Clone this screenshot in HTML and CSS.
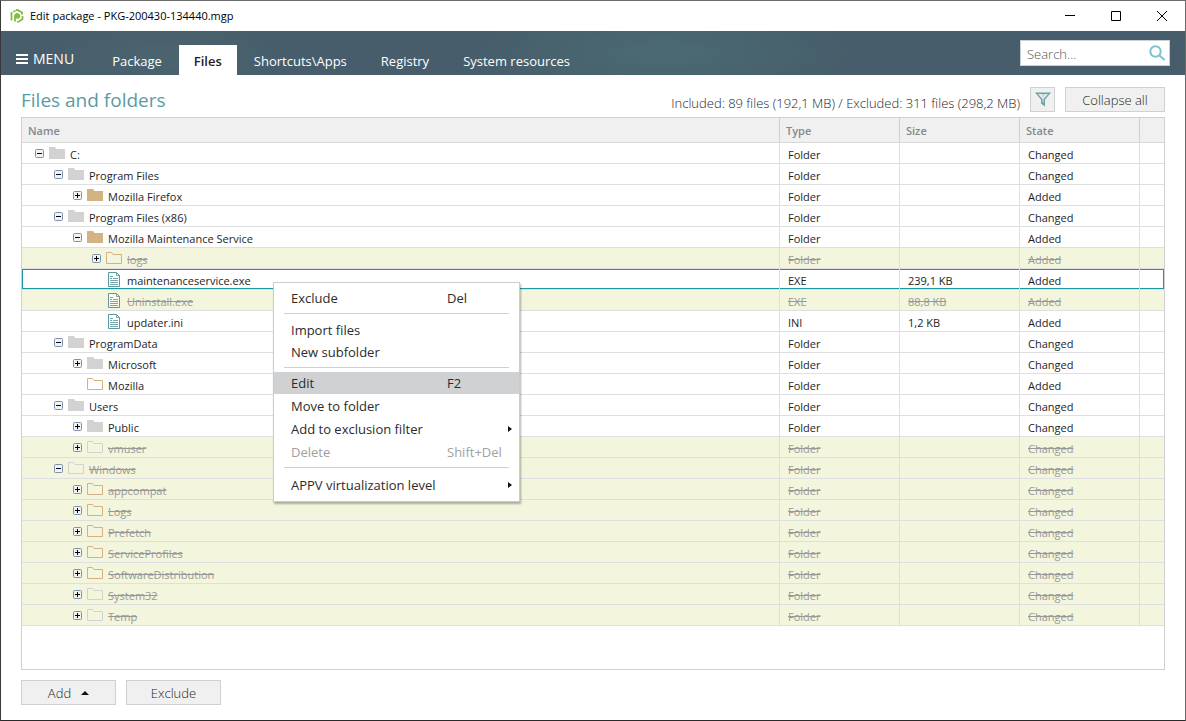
FILE: index.html
```html
<!DOCTYPE html>
<html lang="en">
<head>
<meta charset="utf-8">
<title>Edit package - PKG-200430-134440.mgp</title>
<link rel="stylesheet" href="styles.css">
</head>
<body>
<svg class="defs" aria-hidden="true">
  <symbol id="folder" viewBox="0 0 16 12"><path d="M0 0h6l1.500 2H16v10H0z" fill="currentColor"/></symbol>
  <symbol id="folder-open" viewBox="0 0 16 12"><path d="M.5.5h5L7 2.500h8.500v9H.5z" fill="none" stroke="currentColor"/></symbol>
  <symbol id="file" viewBox="0 0 16 15"><path d="M2.500.5h8l3 3v11h-11z" fill="#fff" fill-opacity=".6" stroke="#5f979c"/><path d="M10.500.5v3h3M4 4.500h3M4 6.500h2M7 6.500h5M4 8.500h8M4 10.500h8M4 12.500h8" fill="none" stroke="#5f979c" stroke-opacity=".85"/></symbol>
  <symbol id="minus" viewBox="0 0 9 9"><rect x=".5" y=".5" width="8" height="8" rx="1" fill="#f4f2ee" stroke="#7b93b0"/><path d="M2 4.500h5" stroke="#000"/></symbol>
  <symbol id="plus" viewBox="0 0 9 9"><rect x=".5" y=".5" width="8" height="8" rx="1" fill="#f4f2ee" stroke="#7b93b0"/><path d="M2 4.500h5M4.500 2v5" stroke="#000"/></symbol>
</svg>
<div class="window">
  <header class="titlebar">
    <svg class="app-icon" viewBox="0 0 14 14" fill="none" stroke="#86bb40" stroke-width="1.800"><path d="M1.500 3v8.500"/><path d="M5 12.500V6.500L7 4.300"/><path d="M6 1.200 7.500 1 12 3.500v2M12.500 7v3L9 12.500l-2 .5"/><path d="M3.300 2.800 5.500 1.500"/><circle cx="7.500" cy="7" r="1.800" fill="#86bb40"/></svg>
    <h1 class="caption">Edit package - PKG-200430-134440.mgp</h1>
    <div class="window-controls">
      <button class="win-btn" aria-label="Minimize"><svg viewBox="0 0 10 10"><path d="M0 4.500h10" stroke="#000"/></svg></button>
      <button class="win-btn" aria-label="Maximize"><svg viewBox="0 0 10 10"><path d="M.5.5h9v9h-9z" fill="none" stroke="#000"/></svg></button>
      <button class="win-btn" aria-label="Close"><svg viewBox="0 0 10 10"><path d="M0 0l10 10M10 0L0 10" stroke="#000"/></svg></button>
    </div>
  </header>
  <div class="ribbon">
    <button class="menu-btn"><svg viewBox="0 0 12 10"><path d="M0 1h12M0 5h12M0 9h12" stroke="#fff" stroke-width="2"/></svg>MENU</button>
    <nav class="tabs">
      <a class="tab" href="#package">Package</a>
      <a class="tab tab-active" href="#files" aria-current="page">Files</a>
      <a class="tab" href="#shortcuts">Shortcuts\Apps</a>
      <a class="tab" href="#registry">Registry</a>
      <a class="tab" href="#system">System resources</a>
    </nav>
    <div class="search">
      <input class="search-input" type="text" placeholder="Search..." aria-label="Search">
      <svg viewBox="0 0 16 16" fill="none" stroke="#7cc5cd" stroke-width="2"><circle cx="6.500" cy="6.500" r="5.200"/><path d="M10.500 10.500l5 4.500"/></svg>
    </div>
  </div>
  <main class="content">
    <div class="toolbar">
      <h2 class="page-title">Files and folders</h2>
      <p class="summary">Included: 89 files (192,1 MB) / Excluded: 311 files (298,2 MB)</p>
      <button class="btn btn-filter" aria-label="Filter"><svg viewBox="0 0 16 16"><path d="M0 .5h16L10 7.500v7l-4-3v-4z" fill="#6ba0a5"/><path d="M3 2h10L8.500 7v3.500H7.500V7z" fill="#f0f0f0"/><path d="M6 2h5L8 6z" fill="#c3dadc"/></svg></button>
      <button class="btn btn-collapse">Collapse all</button>
    </div>
    <div class="panel">
      <table class="files">
        <colgroup><col><col class="col-data"><col class="col-data"><col class="col-data"><col class="col-end"></colgroup>
        <thead><tr><th>Name</th><th>Type</th><th>Size</th><th>State</th><th></th></tr></thead>
        <tbody>
          <tr><td><div class="node l0"><button class="exp" aria-label="Collapse"><svg><use href="#minus"/></svg></button><svg class="ico gray"><use href="#folder"/></svg><span>C:</span></div></td><td>Folder</td><td></td><td>Changed</td><td></td></tr>
          <tr><td><div class="node l1"><button class="exp" aria-label="Collapse"><svg><use href="#minus"/></svg></button><svg class="ico gray"><use href="#folder"/></svg><span>Program Files</span></div></td><td>Folder</td><td></td><td>Changed</td><td></td></tr>
          <tr><td><div class="node l2"><button class="exp" aria-label="Expand"><svg><use href="#plus"/></svg></button><svg class="ico tan"><use href="#folder"/></svg><span>Mozilla Firefox</span></div></td><td>Folder</td><td></td><td>Added</td><td></td></tr>
          <tr><td><div class="node l1"><button class="exp" aria-label="Collapse"><svg><use href="#minus"/></svg></button><svg class="ico gray"><use href="#folder"/></svg><span>Program Files (x86)</span></div></td><td>Folder</td><td></td><td>Changed</td><td></td></tr>
          <tr><td><div class="node l2"><button class="exp" aria-label="Collapse"><svg><use href="#minus"/></svg></button><svg class="ico tan"><use href="#folder"/></svg><span>Mozilla Maintenance Service</span></div></td><td>Folder</td><td></td><td>Added</td><td></td></tr>
          <tr class="excluded"><td><div class="node l3"><button class="exp" aria-label="Expand"><svg><use href="#plus"/></svg></button><svg class="ico tan"><use href="#folder-open"/></svg><span>logs</span></div></td><td>Folder</td><td></td><td>Added</td><td></td></tr>
          <tr class="selected"><td><div class="node l3"><i class="exp"></i><svg class="ico doc"><use href="#file"/></svg><span>maintenanceservice.exe</span></div></td><td>EXE</td><td>239,1 KB</td><td>Added</td><td></td></tr>
          <tr class="excluded"><td><div class="node l3"><i class="exp"></i><svg class="ico doc"><use href="#file"/></svg><span>Uninstall.exe</span></div></td><td>EXE</td><td>88,8 KB</td><td>Added</td><td></td></tr>
          <tr><td><div class="node l3"><i class="exp"></i><svg class="ico doc"><use href="#file"/></svg><span>updater.ini</span></div></td><td>INI</td><td>1,2 KB</td><td>Added</td><td></td></tr>
          <tr><td><div class="node l1"><button class="exp" aria-label="Collapse"><svg><use href="#minus"/></svg></button><svg class="ico gray"><use href="#folder"/></svg><span>ProgramData</span></div></td><td>Folder</td><td></td><td>Changed</td><td></td></tr>
          <tr><td><div class="node l2"><button class="exp" aria-label="Expand"><svg><use href="#plus"/></svg></button><svg class="ico gray"><use href="#folder"/></svg><span>Microsoft</span></div></td><td>Folder</td><td></td><td>Changed</td><td></td></tr>
          <tr><td><div class="node l2"><i class="exp"></i><svg class="ico tan"><use href="#folder-open"/></svg><span>Mozilla</span></div></td><td>Folder</td><td></td><td>Added</td><td></td></tr>
          <tr><td><div class="node l1"><button class="exp" aria-label="Collapse"><svg><use href="#minus"/></svg></button><svg class="ico gray"><use href="#folder"/></svg><span>Users</span></div></td><td>Folder</td><td></td><td>Changed</td><td></td></tr>
          <tr><td><div class="node l2"><button class="exp" aria-label="Expand"><svg><use href="#plus"/></svg></button><svg class="ico gray"><use href="#folder"/></svg><span>Public</span></div></td><td>Folder</td><td></td><td>Changed</td><td></td></tr>
          <tr class="excluded"><td><div class="node l2"><button class="exp" aria-label="Expand"><svg><use href="#plus"/></svg></button><svg class="ico gray"><use href="#folder-open"/></svg><span>vmuser</span></div></td><td>Folder</td><td></td><td>Changed</td><td></td></tr>
          <tr class="excluded"><td><div class="node l1"><button class="exp" aria-label="Collapse"><svg><use href="#minus"/></svg></button><svg class="ico gray"><use href="#folder-open"/></svg><span>Windows</span></div></td><td>Folder</td><td></td><td>Changed</td><td></td></tr>
          <tr class="excluded"><td><div class="node l2"><button class="exp" aria-label="Expand"><svg><use href="#plus"/></svg></button><svg class="ico tan"><use href="#folder-open"/></svg><span>appcompat</span></div></td><td>Folder</td><td></td><td>Changed</td><td></td></tr>
          <tr class="excluded"><td><div class="node l2"><button class="exp" aria-label="Expand"><svg><use href="#plus"/></svg></button><svg class="ico tan"><use href="#folder-open"/></svg><span>Logs</span></div></td><td>Folder</td><td></td><td>Changed</td><td></td></tr>
          <tr class="excluded"><td><div class="node l2"><button class="exp" aria-label="Expand"><svg><use href="#plus"/></svg></button><svg class="ico tan"><use href="#folder-open"/></svg><span>Prefetch</span></div></td><td>Folder</td><td></td><td>Changed</td><td></td></tr>
          <tr class="excluded"><td><div class="node l2"><button class="exp" aria-label="Expand"><svg><use href="#plus"/></svg></button><svg class="ico tan"><use href="#folder-open"/></svg><span>ServiceProfiles</span></div></td><td>Folder</td><td></td><td>Changed</td><td></td></tr>
          <tr class="excluded"><td><div class="node l2"><button class="exp" aria-label="Expand"><svg><use href="#plus"/></svg></button><svg class="ico tan"><use href="#folder-open"/></svg><span>SoftwareDistribution</span></div></td><td>Folder</td><td></td><td>Changed</td><td></td></tr>
          <tr class="excluded"><td><div class="node l2"><button class="exp" aria-label="Expand"><svg><use href="#plus"/></svg></button><svg class="ico gray"><use href="#folder-open"/></svg><span>System32</span></div></td><td>Folder</td><td></td><td>Changed</td><td></td></tr>
          <tr class="excluded"><td><div class="node l2"><button class="exp" aria-label="Expand"><svg><use href="#plus"/></svg></button><svg class="ico gray"><use href="#folder-open"/></svg><span>Temp</span></div></td><td>Folder</td><td></td><td>Changed</td><td></td></tr>
        </tbody>
      </table>
      <div class="context-menu" role="menu">
        <div class="group">
          <button class="item" role="menuitem"><span>Exclude</span><span>Del</span></button>
        </div>
        <div class="group">
          <button class="item" role="menuitem"><span>Import files</span></button>
          <button class="item" role="menuitem"><span>New subfolder</span></button>
        </div>
        <div class="group group-edit">
          <button class="item item-active" role="menuitem"><span>Edit</span><span>F2</span></button>
          <button class="item" role="menuitem"><span>Move to folder</span></button>
          <button class="item item-sub" role="menuitem"><span>Add to exclusion filter</span></button>
          <button class="item" role="menuitem" disabled><span>Delete</span><span>Shift+Del</span></button>
        </div>
        <div class="group group-last">
          <button class="item item-sub" role="menuitem"><span>APPV virtualization level</span></button>
        </div>
      </div>
    </div>
    <footer class="actions">
      <button class="btn btn-action">Add<i class="caret-up"></i></button>
      <button class="btn btn-action">Exclude</button>
    </footer>
  </main>
</div>
</body>
</html>
```
FILE: styles.css
```css
* { box-sizing: border-box; }
body { margin: 0; font: 11px/18px "Open Sans", "Noto Sans", sans-serif; color: #1e1e1e; background: #fff; }
button { font: inherit; color: inherit; border: 0; padding: 0; background: none; }
.defs { position: absolute; width: 0; height: 0; }
.window { display: flex; flex-direction: column; min-height: 100vh; border: 1px solid #6b6b6b; border-left-color: #3a3a3a; border-bottom-color: #2a2a2a; }

.titlebar { display: flex; align-items: center; height: 30px; padding-left: 9px; }
.app-icon { width: 14px; height: 14px; }
.caption { margin: 0 auto 0 6px; font-size: 11px; font-weight: 400; color: #000; }
.window-controls { display: flex; }
.win-btn { display: grid; place-items: center; width: 46px; height: 29px; }
.win-btn svg { width: 10px; height: 10px; }

.ribbon { display: flex; align-items: center; height: 44px; padding: 0 15px; color: #fff; background: radial-gradient(ellipse 190px 50px at 56% 50%, #4a6b73, transparent), radial-gradient(ellipse 120px 36px at 14% 60%, #4b6570, transparent), #475d6b; }
.menu-btn { display: flex; align-items: center; gap: 5px; padding-top: 12px; font-size: 14px; }
.menu-btn svg { width: 12px; height: 10px; }
.tabs { display: flex; align-self: flex-end; margin-left: 21px; }
.tab { display: grid; place-items: center; height: 30px; padding: 2px 17px 0; color: #fff; font-size: 13px; text-decoration: none; }
.tab-active { padding: 2px 15px 0; color: #1e1e1e; background: #fff; font-weight: 600; }
.search { display: flex; align-items: center; width: 150px; height: 26px; margin-left: auto; padding: 0 4px 0 6px; background: #fff; border: 1px solid #c9cfd3; }
.search-input { flex: 1; min-width: 0; padding: 2px 0 0; border: 0; outline: 0; font: 300 13px/20px "Open Sans", sans-serif; color: #333; background: none; }
.search-input::placeholder { color: #555; opacity: 1; }
.search svg { width: 16px; height: 16px; }

.content { display: flex; flex: 1; flex-direction: column; padding: 12px 20px 15px; }
.toolbar { display: flex; align-items: center; height: 25px; margin-bottom: 5px; }
.page-title { margin: 2px auto 0 0; font-size: 19px; line-height: 25px; font-weight: 400; color: #5b9ba4; }
.summary { margin: 6px 10px 0 0; font-size: 13px; font-weight: 300; }
.btn { display: flex; align-items: center; justify-content: center; height: 25px; font-size: 13px; font-weight: 300; background: #f0f0f0; border: 1px solid #d0d0d0; }
.btn-filter { width: 25px; margin-right: 10px; }
.btn-filter svg { width: 16px; height: 16px; }
.btn-collapse { width: 100px; }

.panel { position: relative; flex: 1; border: 1px solid #d0d0d0; }
.files { width: 100%; border-collapse: separate; border-spacing: 0; table-layout: fixed; }
.col-data { width: 120px; }
.col-end { width: 24px; }
th { height: 25px; padding: 1px 6px 0; text-align: left; font-weight: 600; color: #85888b; background: #f0f0f0; border-right: 1px solid #d0d0d0; border-bottom: 1px solid #d8d8d8; }
td { height: 21px; padding: 2px 0 0 8px; line-height: 18px; border-right: 1px solid #dedfe1; border-bottom: 1px solid #dedfe1; }
td:not(:first-child) { padding-top: 4px; line-height: 16px; }
th:last-child, td:last-child { border-right: 0; }
td:first-child { padding: 0; }
.node { display: flex; align-items: center; gap: 5px; height: 20px; }
.node span { padding-top: 4px; line-height: 16px; }
.l0 { padding-left: 13px; }
.l1 { padding-left: 32px; }
.l2 { padding-left: 51px; }
.l3 { padding-left: 70px; }
.exp { flex: none; width: 9px; height: 9px; }
.exp svg { display: block; width: 9px; height: 9px; }
.ico { flex: none; width: 16px; height: 12px; }
.doc { height: 15px; }
.gray { color: #d2d2d2; }
.tan { color: #d4b282; }
.excluded { color: #999; background: #f3f5dd; }
.excluded td { text-decoration: line-through; }
.selected td { box-shadow: inset 0 1px #1f97a0, inset 0 -1px #1f97a0; }
.selected td:first-child { box-shadow: inset 0 1px #1f97a0, inset 0 -1px #1f97a0, inset 1px 0 #1f97a0; }
.selected td:last-child { box-shadow: inset 0 1px #1f97a0, inset 0 -1px #1f97a0, inset -1px 0 #1f97a0; }

.context-menu { position: absolute; left: 251px; top: 164px; width: 247px; font-size: 13px; background: #fff; border: 1px solid #ccc; box-shadow: 1px 2px 2px rgba(0, 0, 0, .3); }
.group { display: grid; padding: 4px 0; }
.group + .group { padding-top: 6px; background: linear-gradient(#d0d0d0, #d0d0d0) 10px 0 / calc(100% - 20px) 1px no-repeat; }
.group + .group-edit { gap: 1px; padding: 5px 0 4px; }
.group + .group-last { padding: 7px 0 5px; }
.item { display: grid; grid-template-columns: 156px 1fr; align-items: center; height: 22px; padding: 0 7px 0 17px; text-align: left; color: #2b2b2b; }
.item span { white-space: nowrap; }
.item-active { background: #d0d1d3; }
.item:disabled { color: #a0a0a0; }
.item-sub::after { content: ""; justify-self: end; border: 3px solid transparent; border-left: 4px solid #111; border-right: 0; }

.actions { display: flex; gap: 10px; margin-top: 10px; }
.btn-action { width: 95px; }
.caret-up { margin-left: 10px; border: 4px solid transparent; border-top: 0; border-bottom-color: #111; }
```
